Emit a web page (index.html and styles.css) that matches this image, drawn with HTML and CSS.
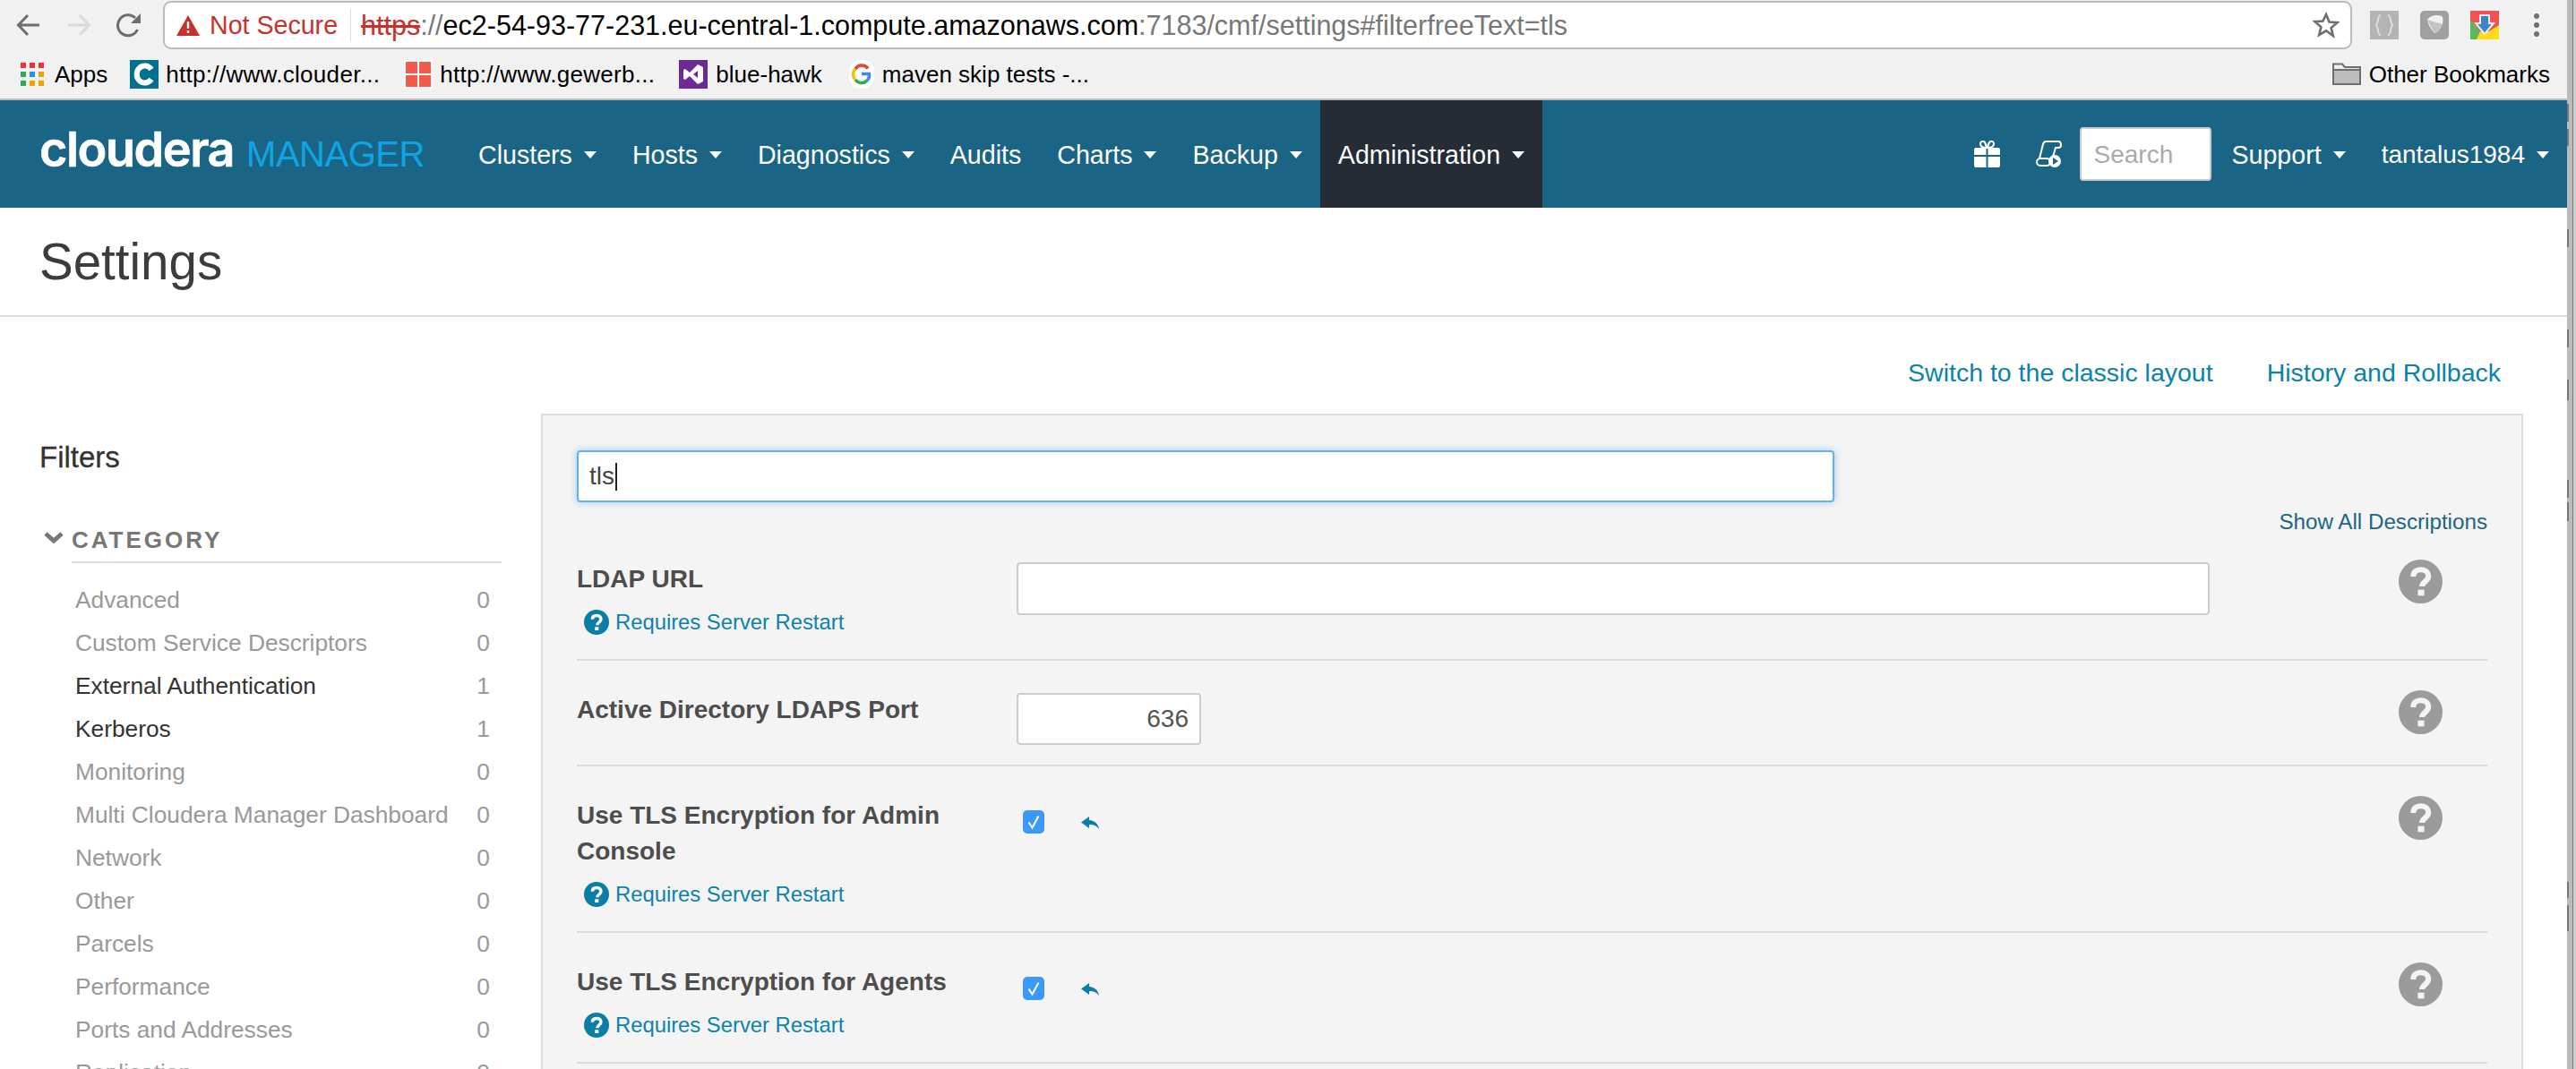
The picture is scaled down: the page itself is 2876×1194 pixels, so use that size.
FILE: index.html
```html
<!DOCTYPE html>
<html lang="en">
<head>
  <meta charset="UTF-8">
  <title>Settings</title>
  <link rel="stylesheet" href="styles.css">
</head>
<body>

  <svg class="defs" width="0" height="0">
    <symbol id="help" viewBox="0 0 48 48">
      <circle cx="24" cy="24" r="24" fill="currentColor"/>
      <path d="M16 18.5c0-5 3.500-7.500 8-7.500s8.500 2.500 8.500 7c0 6-7 6-7 11.500" fill="none" stroke="var(--mark)" stroke-width="6"/>
      <rect x="21" y="33" width="7" height="6.500" fill="var(--mark)"/>
    </symbol>
    <symbol id="check" viewBox="0 0 24 26">
      <rect width="24" height="26" rx="5" fill="#3b99fc"/>
      <path d="M6.500 13.500l4 6 7-13" fill="none" stroke="#fff" stroke-width="2"/>
    </symbol>
    <symbol id="undo" viewBox="0 0 20 14">
      <path d="M9 0L0 6.500 9 13V9c5 0 8 1 11 5-1-6-5-9.500-11-10z" fill="#0b7ea8"/>
    </symbol>
  </svg>

  <div class="window">
    <div class="page">

      <!-- browser toolbar -->
      <div class="toolbar">
        <svg class="tool-icon" width="28" height="28" viewBox="0 0 28 28"><path d="M26 14H3M13 3L2.500 14 13 25" fill="none" stroke="#6e6e6e" stroke-width="3"/></svg>
        <svg class="tool-icon fwd" width="28" height="28" viewBox="0 0 28 28"><path d="M2 14h23M15 3l10.500 11L15 25" fill="none" stroke="#dadada" stroke-width="3"/></svg>
        <svg class="tool-icon reload" width="28" height="28" viewBox="0 0 28 28"><path d="M23.500 19A11.500 11.500 0 1 1 21 6" fill="none" stroke="#6e6e6e" stroke-width="3"/><path d="M27 1v11H16z" fill="#6e6e6e"/></svg>
        <div class="address">
          <svg class="warn" width="26" height="23" viewBox="0 0 26 23"><path d="M13 0l13 23H0z" fill="#c5312b"/><rect x="11.800" y="7" width="2.400" height="8" fill="#fff"/><rect x="11.800" y="17" width="2.400" height="3" fill="#fff"/></svg>
          <span class="not-secure">Not Secure</span>
          <span class="addr-sep"></span>
          <span class="url"><span class="url-https">https</span><span class="url-dim">://</span>ec2-54-93-77-231.eu-central-1.compute.amazonaws.com<span class="url-dim">:7183/cmf/settings#filterfreeText=tls</span></span>
          <svg class="star" width="30" height="30" viewBox="0 0 30 30"><path d="M15 3l3.500 8.500 9 .7-6.900 5.900 2.200 8.900L15 21.300 7.200 26l2.200-8.900-6.900-5.900 9-.7z" fill="none" stroke="#6e6e6e" stroke-width="2.600"/></svg>
        </div>
        <svg class="ext ext-a" width="32" height="32" viewBox="0 0 32 32"><rect width="32" height="32" fill="#b4b4b4"/><path d="M12 5c-4 0-2 8-5 11 3 3 1 11 5 11M20 5c4 0 2 8 5 11-3 3-1 11-5 11" fill="none" stroke="#dedede" stroke-width="2"/></svg>
        <svg class="ext ext-b" width="32" height="32" viewBox="0 0 32 32"><rect width="32" height="32" rx="5" fill="#a0a0a0"/><path d="M8 10c4-6 14-6 17-3 2 8-3 16-9 18C12 20 9 16 8 10z" fill="#f2f2f2"/><path d="M8 10c3 7 6 10 8 15 5-3 8-6 9-10" fill="#c4c4c4"/></svg>
        <svg class="ext ext-c" width="32" height="32" viewBox="0 0 32 32"><rect width="32" height="32" fill="#f05350"/><path d="M0 10l11 13-4 9H0z" fill="#5cb85c"/><path d="M32 16v16H7l4-9h10z" fill="#ffdc17"/><path d="M11 5h10v9h5L16 26 6 14h5z" fill="#3d86c6" stroke="#e8eef2" stroke-width="2"/></svg>
        <svg class="menu-dots" width="6" height="26" viewBox="0 0 6 26"><circle cx="3" cy="3" r="3" fill="#6e6e6e"/><circle cx="3" cy="13" r="3" fill="#6e6e6e"/><circle cx="3" cy="23" r="3" fill="#6e6e6e"/></svg>
      </div>

      <!-- bookmarks -->
      <div class="bookmarks">
        <div class="bm bm-apps">
          <svg width="26" height="26" viewBox="0 0 26 26">
            <rect width="6" height="6" fill="#f42f3a"/><rect x="10" width="6" height="6" fill="#f42f3a"/><rect x="20" width="6" height="6" fill="#f42f3a"/>
            <rect y="10" width="6" height="6" fill="#34a853"/><rect x="10" y="10" width="6" height="6" fill="#2a8df0"/><rect x="20" y="10" width="6" height="6" fill="#f2a100"/>
            <rect y="20" width="6" height="6" fill="#34a853"/><rect x="10" y="20" width="6" height="6" fill="#f2a100"/><rect x="20" y="20" width="6" height="6" fill="#f2a100"/>
          </svg>
          <span>Apps</span>
        </div>
        <div class="bm bm-url">
          <svg width="32" height="32" viewBox="0 0 32 32"><rect width="32" height="32" fill="#00708f"/><path d="M24 10.500A9 9.500 0 1 0 24 21.500" fill="none" stroke="#fff" stroke-width="6"/></svg>
          <span>http://www.clouder...</span>
        </div>
        <div class="bm bm-url">
          <svg width="32" height="32" viewBox="0 0 32 32"><rect width="32" height="32" fill="#fff"/><rect x="2" y="2" width="13" height="13" fill="#f4594a"/><rect x="17" y="2" width="13" height="13" fill="#f4594a"/><rect x="2" y="17" width="13" height="13" fill="#f4594a"/><rect x="17" y="17" width="13" height="13" fill="#f4594a"/></svg>
          <span>http://www.gewerb...</span>
        </div>
        <div class="bm bm-hawk">
          <svg width="32" height="32" viewBox="0 0 32 32"><rect width="32" height="32" fill="#6c2b92"/><path d="M21 5l6 3v16l-6 3-9-9-5 4-2-1V11l2-1 5 4zm0 7l-5 4 5 4z" fill="#fff"/></svg>
          <span>blue-hawk</span>
        </div>
        <div class="bm">
          <svg width="28" height="32" viewBox="0 0 28 32">
            <rect width="28" height="32" rx="13" fill="#fff"/>
            <path d="M21 9.500A8.500 8.500 0 0 0 7 10" fill="none" stroke="#ea4335" stroke-width="3.500"/>
            <path d="M7 10a8.500 8.500 0 0 0 0 12" fill="none" stroke="#fbbc05" stroke-width="3.500"/>
            <path d="M7 22a8.500 8.500 0 0 0 13 1" fill="none" stroke="#34a853" stroke-width="3.500"/>
            <path d="M20 23a8.500 8.500 0 0 0 2.500-7.500H14" fill="none" stroke="#4285f4" stroke-width="3.500"/>
          </svg>
          <span>maven skip tests -...</span>
        </div>
        <div class="bm bm-other">
          <svg width="32" height="26" viewBox="0 0 32 26"><path d="M1 24V1.500h10l3 3.500h17v19z" fill="#efefef" stroke="#6e6e6e" stroke-width="2"/><rect x="2" y="9" width="28" height="14" fill="#bdbdbd"/><path d="M1 8h30" stroke="#6e6e6e" stroke-width="2"/></svg>
          <span>Other Bookmarks</span>
        </div>
      </div>

      <!-- app navbar -->
      <div class="navbar">
        <div class="brand"><span class="brand-a">cloudera</span><span class="brand-b">MANAGER</span></div>
        <a class="nav-item">Clusters<i class="caret"></i></a>
        <a class="nav-item">Hosts<i class="caret"></i></a>
        <a class="nav-item">Diagnostics<i class="caret"></i></a>
        <a class="nav-item">Audits</a>
        <a class="nav-item">Charts<i class="caret"></i></a>
        <a class="nav-item">Backup<i class="caret"></i></a>
        <a class="nav-item active">Administration<i class="caret"></i></a>
        <div class="nav-right">
          <svg class="nav-gift" width="29" height="30" viewBox="0 0 29 30"><path d="M14 8C9 8 7 6 7 3.500S10 0 11.500 1.500 14 8 14 8zm1 0c5 0 7-2 7-4.500S19 0 17.500 1.500 15 8 15 8z" fill="none" stroke="#fff" stroke-width="2"/><path d="M2 8h11.500v8H0v-6a2 2 0 0 1 2-2zm13.500 0H27a2 2 0 0 1 2 2v6H15.500zM0 18h13.500v12H2a2 2 0 0 1-2-2zm15.500 0H29v10a2 2 0 0 1-2 2H15.500z" fill="#fff"/></svg>
          <svg class="nav-scroll" width="29" height="30" viewBox="0 0 29 30"><path d="M4 20L8 4a4 4 0 0 1 4-3h13c2 0 3 2 3 4s-1 3-3 3h-3l-3 10" fill="none" stroke="#fff" stroke-width="2"/><rect x="1" y="20" width="15" height="8" rx="4" fill="#1a6585" stroke="#fff" stroke-width="2"/><circle cx="21" cy="23" r="7" fill="#fff"/><path d="M19 19l6 4-6 4z" fill="#1a6585"/></svg>
          <input class="nav-search" type="text" placeholder="Search">
          <a class="nav-item">Support<i class="caret"></i></a>
          <a class="nav-item nav-user">tantalus1984<i class="caret"></i></a>
        </div>
      </div>

      <div class="page-title"><h1>Settings</h1></div>

      <div class="content">
        <div class="sidebar">
          <h3>Filters</h3>
          <div class="cat-head">
            <svg width="24" height="14" viewBox="0 0 24 14"><path d="M3 3l9 8 9-8" fill="none" stroke="#777" stroke-width="5"/></svg>
            <span>CATEGORY</span>
          </div>
          <ul class="cat-list">
            <li>Advanced<span>0</span></li>
            <li>Custom Service Descriptors<span>0</span></li>
            <li class="on">External Authentication<span>1</span></li>
            <li class="on">Kerberos<span>1</span></li>
            <li>Monitoring<span>0</span></li>
            <li>Multi Cloudera Manager Dashboard<span>0</span></li>
            <li>Network<span>0</span></li>
            <li>Other<span>0</span></li>
            <li>Parcels<span>0</span></li>
            <li>Performance<span>0</span></li>
            <li>Ports and Addresses<span>0</span></li>
            <li>Replication<span>0</span></li>
          </ul>
        </div>

        <div class="main">
          <div class="top-links">
            <a>Switch to the classic layout</a>
            <a>History and Rollback</a>
          </div>
          <div class="panel">
            <div class="filter-box">tls<span class="cursor"></span></div>
            <div class="show-all"><a>Show All Descriptions</a></div>

            <div class="row">
              <div class="row-label">
                <div class="name">LDAP URL</div>
                <div class="restart"><svg class="q" width="28" height="28"><use href="#help"/></svg><a>Requires Server Restart</a></div>
              </div>
              <div class="row-control"><input class="txt txt-wide" type="text"></div>
              <svg class="row-help" width="49" height="49"><use href="#help"/></svg>
            </div>

            <div class="row">
              <div class="row-label">
                <div class="name">Active Directory LDAPS Port</div>
              </div>
              <div class="row-control"><input class="txt txt-num" type="text" value="636"></div>
              <svg class="row-help" width="49" height="49"><use href="#help"/></svg>
            </div>

            <div class="row">
              <div class="row-label">
                <div class="name">Use TLS Encryption for Admin Console</div>
                <div class="restart"><svg class="q" width="28" height="28"><use href="#help"/></svg><a>Requires Server Restart</a></div>
              </div>
              <div class="row-control check-line">
                <svg width="24" height="26"><use href="#check"/></svg>
                <svg class="undo" width="20" height="14"><use href="#undo"/></svg>
              </div>
              <svg class="row-help" width="49" height="49"><use href="#help"/></svg>
            </div>

            <div class="row">
              <div class="row-label">
                <div class="name">Use TLS Encryption for Agents</div>
                <div class="restart"><svg class="q" width="28" height="28"><use href="#help"/></svg><a>Requires Server Restart</a></div>
              </div>
              <div class="row-control check-line">
                <svg width="24" height="26"><use href="#check"/></svg>
                <svg class="undo" width="20" height="14"><use href="#undo"/></svg>
              </div>
              <svg class="row-help" width="49" height="49"><use href="#help"/></svg>
            </div>
          </div>
        </div>
      </div>
    </div>

    <div class="edge"></div>
  </div>

</body>
</html>
```

FILE: styles.css
```css
* {
  box-sizing: border-box;
}
html, body {
  margin: 0;
  height: 100%;
  overflow: hidden;
}
body {
  font-family: "Liberation Sans", Arial, sans-serif;
  color: #333;
  background-color: #fff;
}
.defs {
  display: block;
  height: 0;
}
.window {
  display: flex;
  height: 1194px;
}
.page {
  width: 2866px;
  height: 1194px;
  overflow: hidden;
}
/* window edge with the dark marks down its left side */
.edge {
  width: 10px;
  height: 1194px;
  background:
    linear-gradient(to bottom,
      transparent 116px, #777 116px 136px, transparent 136px 144px, #777 144px 163px,
      transparent 163px 256px, #777 256px 276px, transparent 276px 368px, #777 368px 388px,
      transparent 388px 424px, #777 424px 447px, transparent 447px 536px, #777 536px 556px,
      transparent 556px 561px, #777 561px 582px, transparent 582px 985px, #777 985px 1003px,
      transparent 1003px 1011px, #777 1011px 1040px, transparent 1040px) no-repeat 0 0 / 2px 100%,
    linear-gradient(to right, #bbb 0 6px, #777 6px 7px, #cfcfcf 7px);
}

/* browser chrome */
.toolbar {
  display: flex;
  align-items: center;
  height: 56px;
  padding-left: 18px;
  background-color: #f1f1f1;
}
.tool-icon.fwd {
  margin-left: 28px;
}
.tool-icon.reload {
  margin-left: 28px;
}
.address {
  display: flex;
  align-items: center;
  width: 2444px;
  height: 54px;
  margin: 0 0 0 24px;
  padding-left: 13px;
  background-color: #fff;
  border: 2px solid #bcbcbc;
  border-radius: 9px;
  font-size: 28.600px;
}
.warn {
  margin-right: 11px;
}
.not-secure {
  color: #c5312b;
}
.addr-sep {
  width: 1px;
  height: 38px;
  margin: 0 11px 0 14px;
  background-color: #ddd;
}
.url {
  font-size: 30.500px;
  color: #000;
  white-space: nowrap;
}
.url-https {
  color: #c5312b;
  text-decoration: line-through;
}
.url-dim {
  color: #777;
}
.star {
  margin-left: auto;
  margin-right: 12px;
}
.ext {
  flex: none;
}
.ext-a {
  margin-left: 20px;
}
.ext-b {
  margin-left: 24px;
}
.ext-c {
  margin-left: 24px;
}
.menu-dots {
  margin-left: 39px;
}
.bookmarks {
  display: flex;
  align-items: center;
  height: 56px;
  padding-left: 23px;
  background-color: #f1f1f1;
  border-bottom: 2px solid #bdbdbd;
  font-size: 26px;
  color: #000;
}
.bm {
  display: flex;
  align-items: center;
  gap: 9px;
  margin-right: 27px;
  white-space: nowrap;
}
.bm-apps {
  gap: 12px;
  margin-right: 25px;
}
.bm-url {
  gap: 8px;
  letter-spacing: 0.3px;
}
.bm-hawk {
  margin-right: 30px;
}
.bm-other {
  margin-left: auto;
  margin-right: 19px;
}

/* navbar */
.navbar {
  display: flex;
  align-items: stretch;
  height: 120px;
  background-color: #1a6585;
  color: #fff;
  font-size: 28.600px;
}
.brand {
  display: flex;
  align-items: baseline;
  width: 514px;
  padding: 28px 0 0 44px;
}
.brand-a {
  font-family: Inter, sans-serif;
  font-weight: 600;
  font-size: 54px;
  letter-spacing: -1.5px;
  line-height: 1;
  -webkit-text-stroke: 0.6px #fff;
}
.brand-b {
  margin-left: 14px;
  font-size: 40px;
  letter-spacing: -0.5px;
  line-height: 1;
  color: #0fa5e4;
}
.nav-item {
  display: flex;
  align-items: center;
  padding: 2px 20px 0;
  white-space: nowrap;
}
.nav-item.active {
  background-color: #252c35;
}
.nav-user {
  font-size: 28px;
}
.caret {
  width: 0;
  height: 0;
  margin-left: 13px;
  border-left: 7.5px solid transparent;
  border-right: 7.5px solid transparent;
  border-top: 8px solid #fff;
}
.nav-right {
  display: flex;
  align-items: center;
  margin-left: auto;
}
.nav-right .nav-item {
  height: 100%;
}
.nav-gift {
  margin-right: 40px;
}
.nav-scroll {
  margin-right: 20px;
}
.nav-search {
  width: 147px;
  height: 60px;
  margin-right: 2px;
  padding: 2px 13px 0;
  border: 2px solid #ccc;
  border-radius: 4px;
  font-family: inherit;
  font-size: 28px;
}
.nav-search::placeholder {
  color: #aaa;
}

/* title */
.page-title {
  height: 122px;
  padding-left: 44px;
  border-bottom: 2px solid #ddd;
}
.page-title h1 {
  margin: 0;
  padding-top: 28px;
  font-size: 56.500px;
  font-weight: normal;
  line-height: 66px;
  color: #3c3c3c;
}

/* layout below title */
.content {
  display: flex;
}
.sidebar {
  width: 604px;
  flex: none;
  padding: 137px 0 0 44px;
}
.sidebar h3 {
  margin: 0;
  font-size: 33px;
  font-weight: normal;
  line-height: 40px;
  color: #333;
  -webkit-text-stroke: 0.3px #333;
}
.cat-head {
  display: flex;
  align-items: flex-start;
  margin-top: 52px;
}
.cat-head svg {
  margin: 10px 8px 0 4px;
}
.cat-head span {
  width: 480px;
  height: 46px;
  border-bottom: 2px solid #ddd;
  font-size: 26px;
  font-weight: bold;
  line-height: 40px;
  letter-spacing: 3px;
  color: #777;
}
.cat-list {
  width: 463px;
  margin: 17px 0 0 40px;
  padding: 0;
  list-style: none;
  font-size: 26.300px;
  color: #999;
}
.cat-list li {
  display: flex;
  justify-content: space-between;
  height: 48px;
  line-height: 48px;
}
.cat-list li.on {
  color: #333;
}
.cat-list li span {
  color: #999;
}

.main {
  flex: 1;
  padding-right: 49px;
}
.top-links {
  display: flex;
  justify-content: flex-end;
  gap: 60px;
  padding: 42px 25px 26px 0;
  font-size: 28.500px;
  line-height: 40px;
  color: #0b82ae;
}
.panel {
  height: 800px;
  padding: 39px 38px 0 38px;
  background-color: #f4f4f4;
  border: 2px solid #ddd;
}
.filter-box {
  display: flex;
  align-items: center;
  width: 1404px;
  height: 58px;
  padding-left: 12px;
  background-color: #fff;
  border: 2px solid #66afe9;
  border-radius: 4px;
  box-shadow: 0 0 8px rgba(102, 175, 233, 0.6);
  font-size: 28px;
  color: #444;
}
.cursor {
  width: 2px;
  height: 31px;
  margin-left: 1px;
  background-color: #222;
}
.show-all {
  margin-top: 12px;
  margin-bottom: -1px;
  text-align: right;
  font-size: 24.200px;
  line-height: 20px;
  color: #1a6585;
}
.row {
  display: grid;
  grid-template-columns: 491px 1fr 49px;
  padding: 35px 50px 22px 0;
  border-bottom: 2px solid #ddd;
}
.name {
  width: 430px;
  font-size: 28px;
  font-weight: bold;
  line-height: 40px;
  color: #4d4d4d;
}
.restart {
  display: flex;
  align-items: center;
  height: 34px;
  margin: 11px 0 2px 8px;
  font-size: 23.800px;
  color: #0b82ae;
}
.q {
  margin-right: 7px;
  color: #0b7ea8;
  --mark: #fff;
}
.row-control {
  padding-top: 1px;
}
.txt {
  display: block;
  height: 58px;
  padding: 0 12px;
  background-color: #fff;
  border: 2px solid #ccc;
  border-radius: 4px;
  font-family: inherit;
  font-size: 28px;
  color: #555;
}
.txt-wide {
  width: 1332px;
  height: 59px;
}
.txt-num {
  width: 206px;
  text-align: right;
}
.check-line {
  display: flex;
  align-items: flex-start;
  padding: 14px 0 0 7px;
}
.undo {
  margin: 7px 0 0 41px;
}
.row-help {
  margin-top: -2px;
  color: #9b9b9b;
  --mark: #f4f4f4;
}
```
